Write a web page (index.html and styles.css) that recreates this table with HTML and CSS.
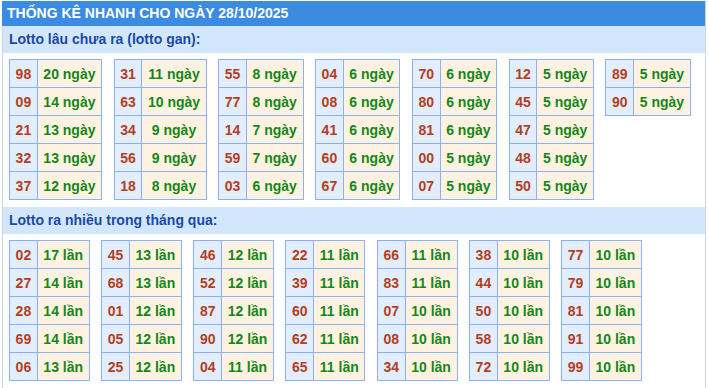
FILE: index.html
```html
<!DOCTYPE html>
<html lang="vi">
<head>
<meta charset="utf-8">
<title>Thống kê nhanh</title>
<link rel="stylesheet" href="styles.css">
</head>
<body>
<div class="box">
  <div class="title">THỐNG KÊ NHANH CHO NGÀY 28/10/2025</div>
  <div class="sub">Lotto lâu chưa ra (lotto gan):</div>
  <div class="group">
    <table class="t"><tr><td class="n">98</td><td class="v">20 ngày</td></tr><tr><td class="n">09</td><td class="v">14 ngày</td></tr><tr><td class="n">21</td><td class="v">13 ngày</td></tr><tr><td class="n">32</td><td class="v">13 ngày</td></tr><tr><td class="n">37</td><td class="v">12 ngày</td></tr></table>
    <table class="t"><tr><td class="n">31</td><td class="v">11 ngày</td></tr><tr><td class="n">63</td><td class="v">10 ngày</td></tr><tr><td class="n">34</td><td class="v">9 ngày</td></tr><tr><td class="n">56</td><td class="v">9 ngày</td></tr><tr><td class="n">18</td><td class="v">8 ngày</td></tr></table>
    <table class="t"><tr><td class="n">55</td><td class="v">8 ngày</td></tr><tr><td class="n">77</td><td class="v">8 ngày</td></tr><tr><td class="n">14</td><td class="v">7 ngày</td></tr><tr><td class="n">59</td><td class="v">7 ngày</td></tr><tr><td class="n">03</td><td class="v">6 ngày</td></tr></table>
    <table class="t"><tr><td class="n">04</td><td class="v">6 ngày</td></tr><tr><td class="n">08</td><td class="v">6 ngày</td></tr><tr><td class="n">41</td><td class="v">6 ngày</td></tr><tr><td class="n">60</td><td class="v">6 ngày</td></tr><tr><td class="n">67</td><td class="v">6 ngày</td></tr></table>
    <table class="t"><tr><td class="n">70</td><td class="v">6 ngày</td></tr><tr><td class="n">80</td><td class="v">6 ngày</td></tr><tr><td class="n">81</td><td class="v">6 ngày</td></tr><tr><td class="n">00</td><td class="v">5 ngày</td></tr><tr><td class="n">07</td><td class="v">5 ngày</td></tr></table>
    <table class="t"><tr><td class="n">12</td><td class="v">5 ngày</td></tr><tr><td class="n">45</td><td class="v">5 ngày</td></tr><tr><td class="n">47</td><td class="v">5 ngày</td></tr><tr><td class="n">48</td><td class="v">5 ngày</td></tr><tr><td class="n">50</td><td class="v">5 ngày</td></tr></table>
    <table class="t"><tr><td class="n">89</td><td class="v">5 ngày</td></tr><tr><td class="n">90</td><td class="v">5 ngày</td></tr></table>
  </div>
  <div class="sub">Lotto ra nhiều trong tháng qua:</div>
  <div class="group">
    <table class="t"><tr><td class="n">02</td><td class="v">17 lần</td></tr><tr><td class="n">27</td><td class="v">14 lần</td></tr><tr><td class="n">28</td><td class="v">14 lần</td></tr><tr><td class="n">69</td><td class="v">14 lần</td></tr><tr><td class="n">06</td><td class="v">13 lần</td></tr></table>
    <table class="t"><tr><td class="n">45</td><td class="v">13 lần</td></tr><tr><td class="n">68</td><td class="v">13 lần</td></tr><tr><td class="n">01</td><td class="v">12 lần</td></tr><tr><td class="n">05</td><td class="v">12 lần</td></tr><tr><td class="n">25</td><td class="v">12 lần</td></tr></table>
    <table class="t"><tr><td class="n">46</td><td class="v">12 lần</td></tr><tr><td class="n">52</td><td class="v">12 lần</td></tr><tr><td class="n">87</td><td class="v">12 lần</td></tr><tr><td class="n">90</td><td class="v">12 lần</td></tr><tr><td class="n">04</td><td class="v">11 lần</td></tr></table>
    <table class="t"><tr><td class="n">22</td><td class="v">11 lần</td></tr><tr><td class="n">39</td><td class="v">11 lần</td></tr><tr><td class="n">60</td><td class="v">11 lần</td></tr><tr><td class="n">62</td><td class="v">11 lần</td></tr><tr><td class="n">65</td><td class="v">11 lần</td></tr></table>
    <table class="t"><tr><td class="n">66</td><td class="v">11 lần</td></tr><tr><td class="n">83</td><td class="v">11 lần</td></tr><tr><td class="n">07</td><td class="v">10 lần</td></tr><tr><td class="n">08</td><td class="v">10 lần</td></tr><tr><td class="n">34</td><td class="v">10 lần</td></tr></table>
    <table class="t"><tr><td class="n">38</td><td class="v">10 lần</td></tr><tr><td class="n">44</td><td class="v">10 lần</td></tr><tr><td class="n">50</td><td class="v">10 lần</td></tr><tr><td class="n">58</td><td class="v">10 lần</td></tr><tr><td class="n">72</td><td class="v">10 lần</td></tr></table>
    <table class="t"><tr><td class="n">77</td><td class="v">10 lần</td></tr><tr><td class="n">79</td><td class="v">10 lần</td></tr><tr><td class="n">81</td><td class="v">10 lần</td></tr><tr><td class="n">91</td><td class="v">10 lần</td></tr><tr><td class="n">99</td><td class="v">10 lần</td></tr></table>
  </div>
</div>
</body>
</html>
```
FILE: styles.css
```css
html, body {
  margin: 0;
  padding: 0;
  background: #ffffff;
}
body {
  font-family: "Liberation Sans", Arial, sans-serif;
}
.box {
  margin: 1px 0 0 2px;
  width: 702px;
  min-height: 400px;
  border-left: 1px solid #c9d5e4;
  border-right: 1px solid #c9d5e4;
}
.title {
  background: #3b8ce0;
  color: #ffffff;
  font-weight: bold;
  font-size: 14px;
  height: 25px;
  line-height: 25px;
  padding-left: 5px;
  margin-left: -1px;
}
.sub {
  background: #d3e7fc;
  color: #1a4aa6;
  font-weight: bold;
  font-size: 14px;
  height: 27px;
  line-height: 27px;
  padding-left: 6px;
}
.group {
  display: flex;
  flex-wrap: wrap;
  align-items: flex-start;
  column-gap: 11.5px;
  row-gap: 8px;
  padding: 6px 0 7px 6px;
}
.t {
  border-collapse: collapse;
  font-weight: bold;
  font-size: 14px;
}
.t td {
  border: 1px solid #8cb0f0;
  height: 27px;
  padding: 0 5.6px;
  text-align: center;
}
.t .n {
  background: #e2eefd;
  color: #b33e1e;
}
.t .v {
  background: #fef3e2;
  color: #168618;
}
```
